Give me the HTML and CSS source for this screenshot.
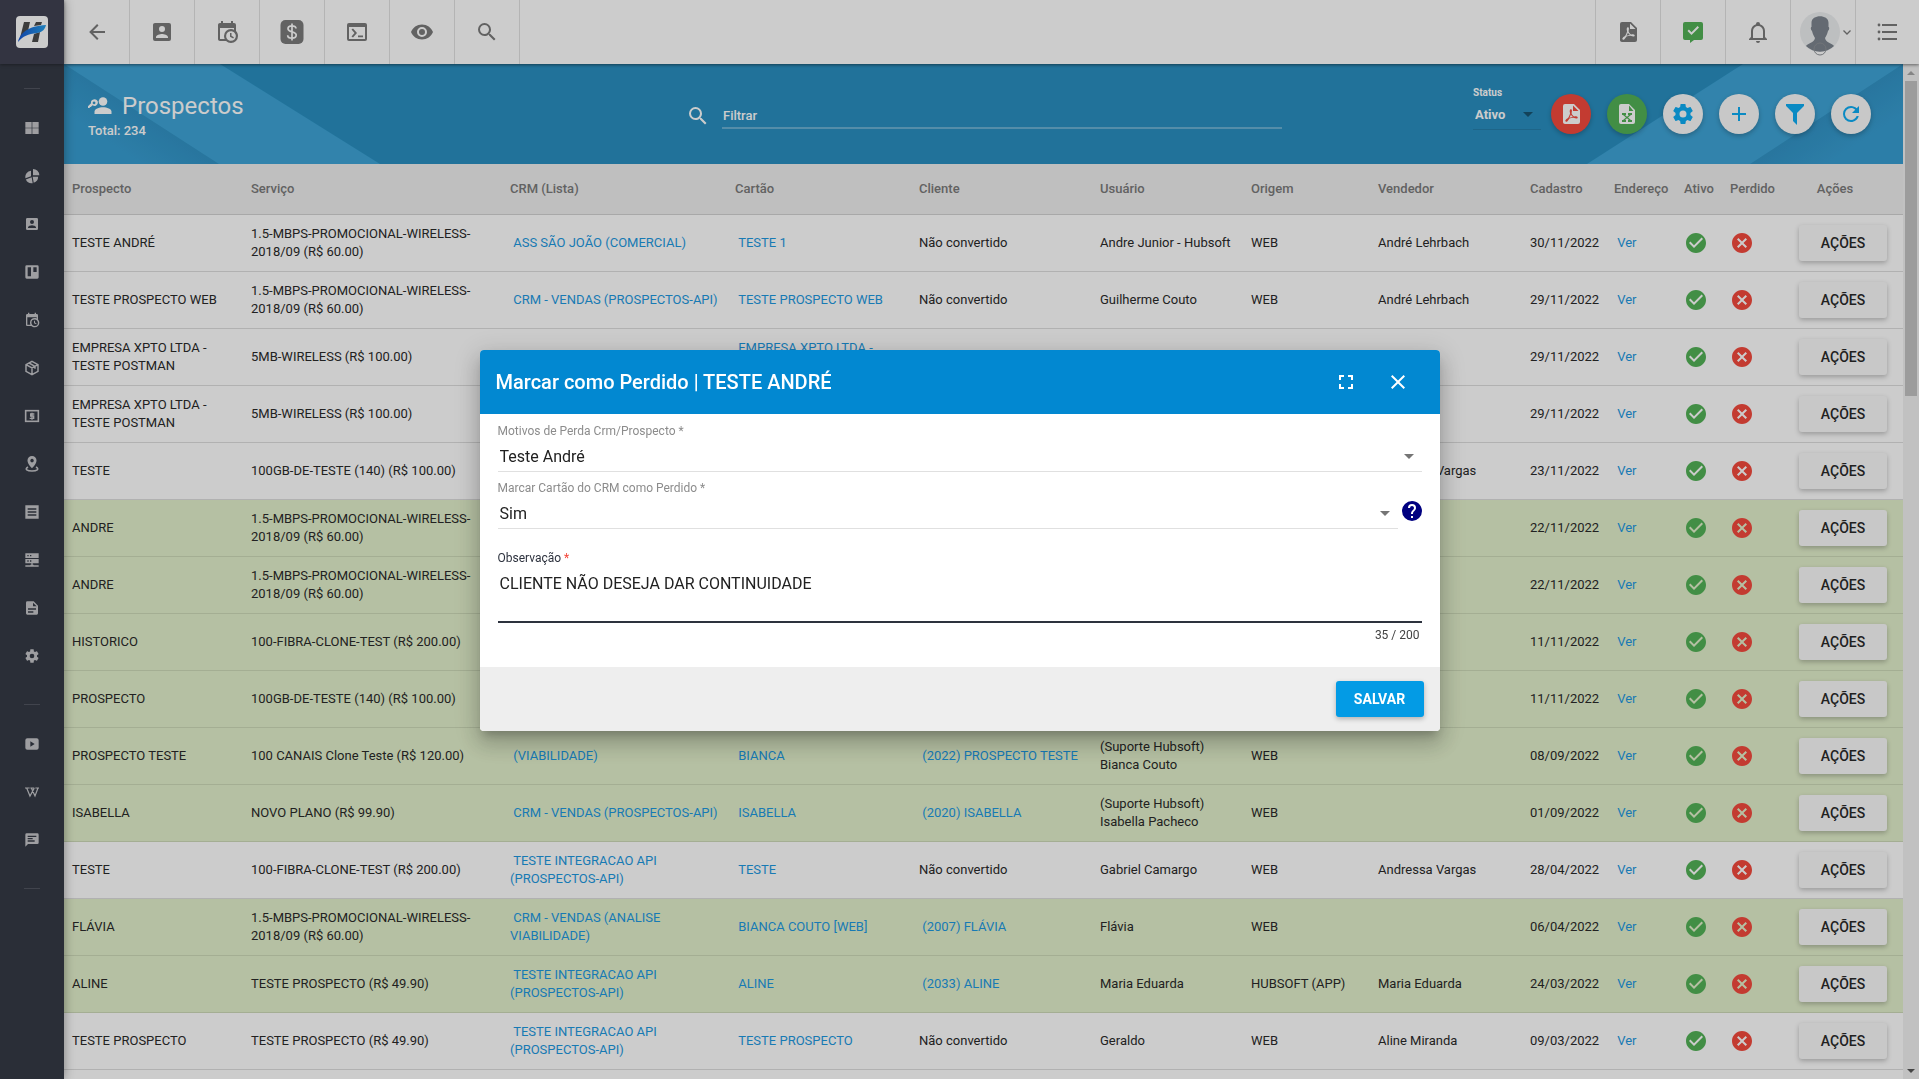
FILE: index.html
```
<!DOCTYPE html>
<html lang="pt-BR">

<head>
    <meta charset="UTF-8">
    <meta name="viewport" content="width=device-width, initial-scale=1.0">
    <title>Prospectos</title>
    <link rel="stylesheet" href="styles.css">
</head>

<body>
    <!-- Icon set -->
    <svg class="icon-set" aria-hidden="true">
        <symbol id="i-back" viewBox="0 0 24 24"><path d="M20,11V13H8L13.5,18.5L12.08,19.92L4.16,12L12.08,4.08L13.5,5.5L8,11H20Z"/></symbol>
        <symbol id="i-account" viewBox="0 0 24 24"><path d="M6,17C6,15 10,13.9 12,13.9C14,13.9 18,15 18,17V18H6M15,9A3,3 0 0,1 12,12A3,3 0 0,1 9,9A3,3 0 0,1 12,6A3,3 0 0,1 15,9M3,5V19A2,2 0 0,0 5,21H19A2,2 0 0,0 21,19V5A2,2 0 0,0 19,3H5C3.89,3 3,3.9 3,5Z"/></symbol>
        <symbol id="i-calendar" viewBox="0 0 24 24"><path d="M15,13H16.5V15.82L18.94,17.23L18.19,18.53L15,16.69V13M19,8H5V19H9.67C9.24,18.09 9,17.07 9,16A7,7 0 0,1 16,9C17.07,9 18.09,9.24 19,9.67V8M5,21C3.89,21 3,20.1 3,19V5C3,3.89 3.89,3 5,3H6V1H8V3H16V1H18V3H19A2,2 0 0,1 21,5V11.1C22.24,12.36 23,14.09 23,16A7,7 0 0,1 16,23C14.09,23 12.36,22.24 11.1,21H5M16,11.15A4.85,4.85 0 0,0 11.15,16C11.15,18.68 13.32,20.85 16,20.85A4.85,4.85 0 0,0 20.85,16C20.85,13.32 18.68,11.15 16,11.15Z"/></symbol>
        <symbol id="i-dollar" viewBox="0 0 24 24"><rect x="0.5" width="23" height="24" rx="5"/><path d="M16,8.5C16,6.8 14.2,5.8 12,5.8S8,6.9 8,8.7C8,12.8 16.2,10.8 16.2,15.1C16.2,17 14.4,18.2 12,18.2S7.7,17 7.7,15.2M12,3.5V20.5" fill="none" stroke="#fff" stroke-width="1.7"/></symbol>
        <symbol id="i-terminal" viewBox="0 0 24 24"><path fill-rule="evenodd" d="M4,3H20A2,2 0 0,1 22,5V19A2,2 0 0,1 20,21H4A2,2 0 0,1 2,19V5A2,2 0 0,1 4,3M4,7V19H20V7ZM6.5,9.5L8,8.5L12,13L8,17.5L6.5,16.5L9.5,13ZM13,15.5H18V17.2H13Z"/></symbol>
        <symbol id="i-eye" viewBox="0 0 24 24"><path d="M12,9A3,3 0 0,0 9,12A3,3 0 0,0 12,15A3,3 0 0,0 15,12A3,3 0 0,0 12,9M12,17A5,5 0 0,1 7,12A5,5 0 0,1 12,7A5,5 0 0,1 17,12A5,5 0 0,1 12,17M12,4.5C7,4.5 2.73,7.61 1,12C2.73,16.39 7,19.5 12,19.5C17,19.5 21.27,16.39 23,12C21.27,7.61 17,4.5 12,4.5Z"/></symbol>
        <symbol id="i-search" viewBox="0 0 24 24"><path d="M9.5,3A6.5,6.5 0 0,1 16,9.5C16,11.11 15.41,12.59 14.44,13.73L14.71,14H15.5L20.5,19L19,20.5L14,15.5V14.71L13.73,14.44C12.59,15.41 11.11,16 9.5,16A6.5,6.5 0 0,1 3,9.5A6.5,6.5 0 0,1 9.5,3M9.5,5C7,5 5,7 5,9.5C5,12 7,14 9.5,14C12,14 14,12 14,9.5C14,7 12,5 9.5,5Z"/></symbol>
        <symbol id="i-pdf" viewBox="0 0 24 24"><path fill-rule="evenodd" d="M14,9H19.5L14,3.5V9M6,2H15L21,8V20A2,2 0 0,1 19,22H6C4.89,22 4,21.1 4,20V4A2,2 0 0,1 6,2M11.93,12.44C12.34,13.34 12.86,14.08 13.46,14.59L13.87,14.91C13,15.07 11.8,15.35 10.53,15.84L10.42,15.88L10.92,14.84C11.37,13.97 11.7,13.18 11.93,12.44M18.41,16.25C18.59,16.07 18.68,15.84 18.69,15.59C18.72,15.39 18.67,15.2 18.57,15.04C18.28,14.57 17.53,14.35 16.29,14.35L15,14.42L14.13,13.84C13.5,13.32 12.93,12.41 12.53,11.28L12.57,11.14C12.9,9.81 13.21,8.2 12.55,7.54C12.39,7.38 12.17,7.3 11.94,7.3H11.7C11.33,7.3 11,7.69 10.91,8.07C10.54,9.4 10.76,10.13 11.13,11.34C10.88,12.23 10.56,13.25 10.05,14.28L9.09,16.08L8.2,16.57C7,17.32 6.43,18.16 6.32,18.69C6.28,18.88 6.3,19.05 6.37,19.23L6.88,19.59L7.32,19.7C8.13,19.7 9.05,18.75 10.29,16.63L10.47,16.56C11.5,16.23 12.78,16 14.5,15.81C15.53,16.32 16.74,16.55 17.5,16.55C17.94,16.55 18.24,16.44 18.41,16.25Z"/></symbol>
        <symbol id="i-excel" viewBox="0 0 24 24"><path fill-rule="evenodd" d="M17,11H13V13H14L12,14.67L10,13H11V11H7V13H8L11,15.5L8,18H7V20H11V18H10L12,16.33L14,18H13V20H17V18H16L13,15.5L16,13H17V11M14,2L20,8V20A2,2 0 0,1 18,22H6A2,2 0 0,1 4,20V4A2,2 0 0,1 6,2H14M14,3.5V9H18.5L14,3.5Z"/></symbol>
        <symbol id="i-message" viewBox="0 0 24 24"><path fill-rule="evenodd" d="M4,2H20A2,2 0 0,1 22,4V18A2,2 0 0,1 20,20H13L9,23V20H4A2,2 0 0,1 2,18V4A2,2 0 0,1 4,2M10.5,15L18,7.5L16.6,6.1L10.5,12.2L7.9,9.6L6.5,11Z"/></symbol>
        <symbol id="i-bell" viewBox="0 0 24 24"><path fill-rule="evenodd" d="M10,21H14A2,2 0 0,1 12,23A2,2 0 0,1 10,21M21,19V20H3V19L5,17V11C5,7.9 7.03,5.17 10,4.29C10,4.19 10,4.1 10,4A2,2 0 0,1 12,2A2,2 0 0,1 14,4C14,4.1 14,4.19 14,4.29C16.97,5.17 19,7.9 19,11V17L21,19M17,11A5,5 0 0,0 12,6A5,5 0 0,0 7,11V18H17V11Z"/></symbol>
        <symbol id="i-list" viewBox="0 0 24 24"><path d="M6,4H21V6H6ZM6,11H21V13H6ZM6,18H21V20H6Z"/><circle cx="3" cy="5" r="1.4"/><circle cx="3" cy="12" r="1.4"/><circle cx="3" cy="19" r="1.4"/></symbol>
        <symbol id="i-gear" viewBox="0 0 24 24"><path fill-rule="evenodd" d="M12,15.5A3.5,3.5 0 0,1 8.5,12A3.5,3.5 0 0,1 12,8.5A3.5,3.5 0 0,1 15.5,12A3.5,3.5 0 0,1 12,15.5M19.43,12.97C19.47,12.65 19.5,12.33 19.5,12C19.5,11.67 19.47,11.34 19.43,11L21.54,9.37C21.73,9.22 21.78,8.95 21.66,8.73L19.66,5.27C19.54,5.05 19.27,4.96 19.05,5.05L16.56,6.05C16.04,5.66 15.5,5.32 14.87,5.07L14.5,2.42C14.46,2.18 14.25,2 14,2H10C9.75,2 9.54,2.18 9.5,2.42L9.13,5.07C8.5,5.32 7.96,5.66 7.44,6.05L4.95,5.05C4.73,4.96 4.46,5.05 4.34,5.27L2.34,8.73C2.21,8.95 2.27,9.22 2.46,9.37L4.57,11C4.53,11.34 4.5,11.67 4.5,12C4.5,12.33 4.53,12.65 4.57,12.97L2.46,14.63C2.27,14.78 2.21,15.05 2.34,15.27L4.34,18.73C4.46,18.95 4.73,19.03 4.95,18.95L7.44,17.94C7.96,18.34 8.5,18.68 9.13,18.93L9.5,21.58C9.54,21.82 9.75,22 10,22H14C14.25,22 14.46,21.82 14.5,21.58L14.87,18.93C15.5,18.67 16.04,18.34 16.56,17.94L19.05,18.95C19.27,19.03 19.54,18.95 19.66,18.73L21.66,15.27C21.78,15.05 21.73,14.78 21.54,14.63L19.43,12.97Z"/></symbol>
        <symbol id="i-plus" viewBox="0 0 24 24"><path d="M19,13H13V19H11V13H5V11H11V5H13V11H19V13Z"/></symbol>
        <symbol id="i-filter" viewBox="0 0 24 24"><path d="M3,2H21V4H20.92L14,10.92V22.91L10,18.91V10.91L3.09,4H3V2Z"/></symbol>
        <symbol id="i-refresh" viewBox="0 0 24 24"><path d="M17.65,6.35C16.2,4.9 14.21,4 12,4A8,8 0 0,0 4,12A8,8 0 0,0 12,20C15.73,20 18.84,17.45 19.73,14H17.65C16.83,16.33 14.61,18 12,18A6,6 0 0,1 6,12A6,6 0 0,1 12,6C13.66,6 15.14,6.69 16.22,7.78L13,11H20V4L17.65,6.35Z"/></symbol>
        <symbol id="i-check" viewBox="0 0 24 24"><path fill-rule="evenodd" d="M12 2C6.48 2 2 6.48 2 12s4.48 10 10 10 10-4.48 10-10S17.52 2 12 2zm-2 15l-5-5 1.41-1.41L10 14.17l7.59-7.59L19 8l-9 9z"/></symbol>
        <symbol id="i-cancel" viewBox="0 0 24 24"><path fill-rule="evenodd" d="M12,2C17.53,2 22,6.47 22,12C22,17.53 17.53,22 12,22C6.47,22 2,17.53 2,12C2,6.47 6.47,2 12,2M15.59,7L12,10.59L8.41,7L7,8.41L10.59,12L7,15.59L8.41,17L12,13.41L15.59,17L17,15.59L13.41,12L17,8.41L15.59,7Z"/></symbol>
        <symbol id="i-people" viewBox="0 0 24 24"><circle cx="15" cy="7.5" r="4.3"/><path d="M6.5,20V17.8C6.5,14.8 11,13.3 15,13.3S23.5,14.8 23.5,17.8V20Z"/><path fill-rule="evenodd" d="M5.5,5.5A3.3,3.3 0 1,1 4.6,11.2L2.8,13H1.8V14H0V12.2L3,9.2A3.3,3.3 0 0,1 5.5,5.5M6,7.4A1.4,1.4 0 1,0 6.1,7.4Z"/></symbol>
        <symbol id="i-grid" viewBox="0 0 24 24"><path d="M2,3H11.5V11.5H2ZM12.5,3H22V11.5H12.5ZM2,12.5H11.5V21H2ZM12.5,12.5H22V21H12.5Z"/></symbol>
        <symbol id="i-pie" viewBox="0 0 24 24"><path d="M13.5,1.5A9.5,9.5 0 0,1 23,11H13.5ZM10.5,4V12.5L2.2,15.5A9.5,9.5 0 0,1 10.5,4M11.5,14L13,22.7A9.5,9.5 0 0,1 2.8,17.2ZM13,13H21.2A9.5,9.5 0 0,1 14.6,22.2Z"/></symbol>
        <symbol id="i-board" viewBox="0 0 24 24"><path fill-rule="evenodd" d="M4,2H20A2,2 0 0,1 22,4V20A2,2 0 0,1 20,22H4A2,2 0 0,1 2,20V4A2,2 0 0,1 4,2M5.5,5V18.5H10.5V5ZM14,5V12H19V5Z"/></symbol>
        <symbol id="i-box" viewBox="0 0 24 24"><path d="M12,2L21,7V17L12,22L3,17V7ZM3,7L12,12L21,7M12,12V22M7.5,4.5L16.5,9.5V13" fill="none" stroke="currentColor" stroke-width="2.2"/></symbol>
        <symbol id="i-cash" viewBox="0 0 24 24"><rect x="2.5" y="4" width="19" height="16" fill="none" stroke="currentColor" stroke-width="2.4"/><path d="M15.5,9H10V12H14.5V15.5H8.5M12,7V17.5" fill="none" stroke="currentColor" stroke-width="2"/></symbol>
        <symbol id="i-pin" viewBox="0 0 24 24"><path fill-rule="evenodd" d="M12,0A6.8,6.8 0 0,1 18.8,6.8C18.8,12 12,18.5 12,18.5S5.2,12 5.2,6.8A6.8,6.8 0 0,1 12,0M12,4.2A2.6,2.6 0 1,0 12.1,4.2Z"/><path d="M6,16.5C0,20 5,22.5 12,22.5S24,20 18,16.5" fill="none" stroke="currentColor" stroke-width="2.2"/></symbol>
        <symbol id="i-article" viewBox="0 0 24 24"><path fill-rule="evenodd" d="M2,2H22V22H2ZM5.5,6.5V8.5H18.5V6.5ZM5.5,11V13H18.5V11ZM5.5,15.5V17.5H18.5V15.5Z"/></symbol>
        <symbol id="i-server" viewBox="0 0 24 24"><path fill-rule="evenodd" d="M2,2H22V9H2ZM5,4.5V6.5H7V4.5ZM9,4.5V6.5H11V4.5ZM2,10.5H22V17H2ZM5,12.5V14.5H7V12.5ZM9,12.5V14.5H11V12.5ZM11,17H13V19H14.5V20H22V22H2V20H9.5V19H11Z"/></symbol>
        <symbol id="i-doc" viewBox="0 0 24 24"><path fill-rule="evenodd" d="M5,2H14.5L21,8.5V20A2,2 0 0,1 19,22H5A2,2 0 0,1 3,20V4A2,2 0 0,1 5,2M13.5,4V9.5H19ZM6,12.5V14.5H18V12.5ZM6,17V19H14V17Z"/></symbol>
        <symbol id="i-play" viewBox="0 0 24 24"><path fill-rule="evenodd" d="M5,3.5H19A3,3 0 0,1 22,6.5V17.5A3,3 0 0,1 19,20.5H5A3,3 0 0,1 2,17.5V6.5A3,3 0 0,1 5,3.5M9.5,8V16L16,12Z"/></symbol>
        <symbol id="i-wiki" viewBox="0 0 24 24"><path d="M1.5,6H8.5M9.5,6H15.5M17,6H22.5M4,6L9,18L15.5,6M11,6L16.5,18L21,6" fill="none" stroke="currentColor" stroke-width="1.8"/></symbol>
        <symbol id="i-chat" viewBox="0 0 24 24"><path fill-rule="evenodd" d="M2,4A2,2 0 0,1 4,2H20A2,2 0 0,1 22,4V16A2,2 0 0,1 20,18H6L2,22ZM5.5,5.5V7.5H18.5V5.5ZM5.5,9V11H13V9ZM5.5,12.5V14.5H16V12.5Z"/></symbol>
        <symbol id="i-fullscreen" viewBox="0 0 24 24"><path d="M5,5H10V7H7V10H5V5M14,5H19V10H17V7H14V5M17,14H19V19H14V17H17V14M10,17V19H5V14H7V17H10Z"/></symbol>
        <symbol id="i-close" viewBox="0 0 24 24"><path d="M19,6.41L17.59,5L12,10.59L6.41,5L5,6.41L10.59,12L5,17.59L6.41,19L12,13.41L17.59,19L19,17.59L13.41,12L19,6.41Z"/></symbol>
        <symbol id="i-help" viewBox="0 0 24 24"><path fill-rule="evenodd" d="M15.07,11.25L14.17,12.17C13.45,12.89 13,13.5 13,15H11V14.5C11,13.39 11.45,12.39 12.17,11.67L13.41,10.41C13.78,10.05 14,9.55 14,9C14,7.89 13.1,7 12,7A2,2 0 0,0 10,9H8A4,4 0 0,1 12,5A4,4 0 0,1 16,9C16,9.88 15.64,10.67 15.07,11.25M13,19H11V17H13M12,2A10,10 0 0,0 2,12A10,10 0 0,0 12,22A10,10 0 0,0 22,12C22,6.47 17.5,2 12,2Z"/></symbol>
        <symbol id="i-caret" viewBox="0 0 10 5"><path d="M0,0H10L5,5Z"/></symbol>
    </svg>

    <div class="app">
        <aside class="sidebar">
            <a href="#" class="logo" aria-label="Início">
                <svg viewBox="0 0 32 32" width="32" height="32">
                    <defs>
                        <linearGradient id="swoosh">
                            <stop offset="0" stop-color="#0b4fd0"/>
                            <stop offset="1" stop-color="#1e9be8"/>
                        </linearGradient>
                    </defs>
                    <rect width="32" height="32" rx="4" fill="#fff"/>
                    <path d="M8,6H14L12,15L4,22ZM20,6H26L25,9L18,10ZM18,18L24,16L22,26H16Z" fill="#444"/>
                    <path d="M2,26C4,17 12,10 30,9C29,13 27,16 21,17C12,18 7,20 2,26Z" fill="url(#swoosh)"/>
                </svg>
            </a>
            <nav class="menu">
                <hr>
                <a href="#" aria-label="Painel"><svg class="icon"><use href="#i-grid"/></svg></a>
                <a href="#" aria-label="Relatórios"><svg class="icon"><use href="#i-pie"/></svg></a>
                <a href="#" aria-label="Clientes"><svg class="icon"><use href="#i-account"/></svg></a>
                <a href="#" aria-label="CRM"><svg class="icon"><use href="#i-board"/></svg></a>
                <a href="#" aria-label="Agenda"><svg class="icon"><use href="#i-calendar"/></svg></a>
                <a href="#" aria-label="Estoque"><svg class="icon"><use href="#i-box"/></svg></a>
                <a href="#" aria-label="Financeiro"><svg class="icon"><use href="#i-cash"/></svg></a>
                <a href="#" aria-label="Mapa"><svg class="icon"><use href="#i-pin"/></svg></a>
                <a href="#" aria-label="Notas"><svg class="icon"><use href="#i-article"/></svg></a>
                <a href="#" aria-label="Rede"><svg class="icon"><use href="#i-server"/></svg></a>
                <a href="#" aria-label="Documentos"><svg class="icon"><use href="#i-doc"/></svg></a>
                <a href="#" aria-label="Configurações"><svg class="icon"><use href="#i-gear"/></svg></a>
                <hr>
                <a href="#" aria-label="Vídeos"><svg class="icon"><use href="#i-play"/></svg></a>
                <a href="#" aria-label="Wiki"><svg class="icon"><use href="#i-wiki"/></svg></a>
                <a href="#" aria-label="Mensagens"><svg class="icon"><use href="#i-chat"/></svg></a>
                <hr>
            </nav>
        </aside>

        <div class="page">
            <header class="topbar">
                <div class="topbar-group">
                    <button type="button" aria-label="Voltar"><svg class="icon"><use href="#i-back"/></svg></button>
                    <button type="button" aria-label="Cliente"><svg class="icon"><use href="#i-account"/></svg></button>
                    <button type="button" aria-label="Agenda"><svg class="icon"><use href="#i-calendar"/></svg></button>
                    <button type="button" aria-label="Financeiro"><svg class="icon"><use href="#i-dollar"/></svg></button>
                    <button type="button" aria-label="Terminal"><svg class="icon"><use href="#i-terminal"/></svg></button>
                    <button type="button" aria-label="Visualizar"><svg class="icon"><use href="#i-eye"/></svg></button>
                    <button type="button" aria-label="Pesquisar"><svg class="icon"><use href="#i-search"/></svg></button>
                </div>
                <div class="topbar-group right">
                    <button type="button" aria-label="PDF"><svg class="icon"><use href="#i-pdf"/></svg></button>
                    <button type="button" class="ok" aria-label="Mensagens"><svg class="icon"><use href="#i-message"/></svg></button>
                    <button type="button" aria-label="Notificações"><svg class="icon"><use href="#i-bell"/></svg></button>
                    <button type="button" class="user" aria-label="Usuário">
                        <svg class="avatar" viewBox="0 0 40 44">
                            <circle cx="20" cy="20" r="20" fill="#eceef0"/>
                            <path d="M11.5,11C11,2 29,2 28.5,11L28.5,15C29.5,15 29.5,18 28,19C27,23 26,24 25,26C26,31 32,31 34,34A20,20 0 0,1 6,34C8,31 14,31 15,26C14,24 13,23 12,19C10.5,18 10.5,15 11.5,15Z" fill="#78808a"/>
                            <circle cx="20" cy="37" r="6" fill="none" stroke="#8a8f94"/>
                        </svg>
                        <svg class="chevron" viewBox="0 0 8 5"><path d="M0.5,0.5L4,4L7.5,0.5" fill="none" stroke="currentColor" stroke-width="1.3"/></svg>
                    </button>
                    <button type="button" aria-label="Menu"><svg class="icon"><use href="#i-list"/></svg></button>
                </div>
            </header>

            <div class="content">
                <main class="main">
                    <section class="page-header">
                        <svg class="band band-left" viewBox="0 0 320 100">
                            <defs>
                                <linearGradient id="foldLeft" gradientUnits="userSpaceOnUse" x1="55" y1="85" x2="78" y2="50">
                                    <stop offset="0" stop-color="#309ad0"/>
                                    <stop offset="1" stop-color="#2a8fc4"/>
                                </linearGradient>
                                <linearGradient id="foldRight" gradientUnits="userSpaceOnUse" x1="267" y1="85" x2="244" y2="50">
                                    <stop offset="0" stop-color="#309ad0"/>
                                    <stop offset="1" stop-color="#2a8fc4"/>
                                </linearGradient>
                            </defs>
                            <path d="M0,0H156L316,100H0Z" fill="#37a1d6"/>
                            <path d="M0,0L155,100H0Z" fill="url(#foldLeft)"/>
                        </svg>
                        <svg class="band band-right" viewBox="0 0 320 100">
                            <path d="M160,0H320V100H4Z" fill="#37a1d6"/>
                            <path d="M320,0V100H167Z" fill="url(#foldRight)"/>
                        </svg>
                        <div class="heading">
                            <h1><svg class="icon"><use href="#i-people"/></svg>Prospectos</h1>
                            <p>Total: 234</p>
                        </div>
                        <div class="search">
                            <label for="filtrar" aria-label="Filtrar"><svg class="icon"><use href="#i-search"/></svg></label>
                            <input type="text" id="filtrar" placeholder="Filtrar">
                        </div>
                        <div class="tools">
                            <div class="status">
                                <label for="status">Status</label>
                                <div class="select-wrapper">
                                    <select id="status"><option>Ativo</option></select>
                                    <svg class="caret"><use href="#i-caret"/></svg>
                                </div>
                            </div>
                            <button type="button" class="fab red" aria-label="Exportar PDF"><svg class="icon"><use href="#i-pdf"/></svg></button>
                            <button type="button" class="fab green" aria-label="Exportar Excel"><svg class="icon"><use href="#i-excel"/></svg></button>
                            <button type="button" class="fab" aria-label="Configurar"><svg class="icon"><use href="#i-gear"/></svg></button>
                            <button type="button" class="fab" aria-label="Adicionar"><svg class="icon"><use href="#i-plus"/></svg></button>
                            <button type="button" class="fab" aria-label="Filtros"><svg class="icon"><use href="#i-filter"/></svg></button>
                            <button type="button" class="fab" aria-label="Atualizar"><svg class="icon"><use href="#i-refresh"/></svg></button>
                        </div>
                    </section>

                    <table class="prospects">
                        <colgroup>
                            <col class="c-prospecto"><col class="c-servico"><col class="c-crm"><col class="c-cartao"><col class="c-cliente"><col class="c-usuario"><col class="c-origem"><col class="c-vendedor"><col class="c-cadastro"><col class="c-endereco"><col class="c-ativo"><col class="c-perdido"><col class="c-acoes">
                        </colgroup>
                        <thead>
                            <tr><th>Prospecto</th><th>Serviço</th><th>CRM (Lista)</th><th>Cartão</th><th>Cliente</th><th>Usuário</th><th>Origem</th><th>Vendedor</th><th>Cadastro</th><th>Endereço</th><th>Ativo</th><th>Perdido</th><th>Ações</th></tr>
                        </thead>
                        <tbody>
                            <tr>
                                <td>TESTE ANDRÉ</td><td>1.5-MBPS-PROMOCIONAL-WIRELESS-2018/09 (R$ 60.00)</td>
                                <td><a href="#">&nbsp;ASS SÃO JOÃO (COMERCIAL)</a></td><td><a href="#">&nbsp;TESTE 1</a></td><td>Não convertido</td>
                                <td>Andre Junior - Hubsoft</td><td>WEB</td><td>André Lehrbach</td><td>30/11/2022</td><td><a href="#">&nbsp;Ver</a></td>
                                <td><svg class="icon on"><use href="#i-check"/></svg></td><td><svg class="icon off"><use href="#i-cancel"/></svg></td><td><button type="button" class="btn">AÇÕES</button></td>
                            </tr>
                            <tr>
                                <td>TESTE PROSPECTO WEB</td><td>1.5-MBPS-PROMOCIONAL-WIRELESS-2018/09 (R$ 60.00)</td>
                                <td><a href="#">&nbsp;CRM - VENDAS (PROSPECTOS-API)</a></td><td><a href="#">&nbsp;TESTE PROSPECTO WEB</a></td><td>Não convertido</td>
                                <td>Guilherme Couto</td><td>WEB</td><td>André Lehrbach</td><td>29/11/2022</td><td><a href="#">&nbsp;Ver</a></td>
                                <td><svg class="icon on"><use href="#i-check"/></svg></td><td><svg class="icon off"><use href="#i-cancel"/></svg></td><td><button type="button" class="btn">AÇÕES</button></td>
                            </tr>
                            <tr>
                                <td>EMPRESA XPTO LTDA - TESTE POSTMAN</td><td>5MB-WIRELESS (R$ 100.00)</td>
                                <td></td><td><a href="#">&nbsp;EMPRESA XPTO LTDA - TESTE POSTMAN</a></td><td></td>
                                <td></td><td></td><td></td><td>29/11/2022</td><td><a href="#">&nbsp;Ver</a></td>
                                <td><svg class="icon on"><use href="#i-check"/></svg></td><td><svg class="icon off"><use href="#i-cancel"/></svg></td><td><button type="button" class="btn">AÇÕES</button></td>
                            </tr>
                            <tr>
                                <td>EMPRESA XPTO LTDA - TESTE POSTMAN</td><td>5MB-WIRELESS (R$ 100.00)</td>
                                <td></td><td></td><td></td>
                                <td></td><td></td><td></td><td>29/11/2022</td><td><a href="#">&nbsp;Ver</a></td>
                                <td><svg class="icon on"><use href="#i-check"/></svg></td><td><svg class="icon off"><use href="#i-cancel"/></svg></td><td><button type="button" class="btn">AÇÕES</button></td>
                            </tr>
                            <tr>
                                <td>TESTE</td><td>100GB-DE-TESTE (140) (R$ 100.00)</td>
                                <td></td><td></td><td></td>
                                <td></td><td></td><td>Andressa Vargas</td><td>23/11/2022</td><td><a href="#">&nbsp;Ver</a></td>
                                <td><svg class="icon on"><use href="#i-check"/></svg></td><td><svg class="icon off"><use href="#i-cancel"/></svg></td><td><button type="button" class="btn">AÇÕES</button></td>
                            </tr>
                            <tr class="converted">
                                <td>ANDRE</td><td>1.5-MBPS-PROMOCIONAL-WIRELESS-2018/09 (R$ 60.00)</td>
                                <td></td><td></td><td></td>
                                <td></td><td></td><td></td><td>22/11/2022</td><td><a href="#">&nbsp;Ver</a></td>
                                <td><svg class="icon on"><use href="#i-check"/></svg></td><td><svg class="icon off"><use href="#i-cancel"/></svg></td><td><button type="button" class="btn">AÇÕES</button></td>
                            </tr>
                            <tr class="converted">
                                <td>ANDRE</td><td>1.5-MBPS-PROMOCIONAL-WIRELESS-2018/09 (R$ 60.00)</td>
                                <td></td><td></td><td></td>
                                <td></td><td></td><td></td><td>22/11/2022</td><td><a href="#">&nbsp;Ver</a></td>
                                <td><svg class="icon on"><use href="#i-check"/></svg></td><td><svg class="icon off"><use href="#i-cancel"/></svg></td><td><button type="button" class="btn">AÇÕES</button></td>
                            </tr>
                            <tr class="converted">
                                <td>HISTORICO</td><td>100-FIBRA-CLONE-TEST (R$ 200.00)</td>
                                <td></td><td></td><td></td>
                                <td></td><td></td><td></td><td>11/11/2022</td><td><a href="#">&nbsp;Ver</a></td>
                                <td><svg class="icon on"><use href="#i-check"/></svg></td><td><svg class="icon off"><use href="#i-cancel"/></svg></td><td><button type="button" class="btn">AÇÕES</button></td>
                            </tr>
                            <tr class="converted">
                                <td>PROSPECTO</td><td>100GB-DE-TESTE (140) (R$ 100.00)</td>
                                <td></td><td></td><td></td>
                                <td></td><td></td><td></td><td>11/11/2022</td><td><a href="#">&nbsp;Ver</a></td>
                                <td><svg class="icon on"><use href="#i-check"/></svg></td><td><svg class="icon off"><use href="#i-cancel"/></svg></td><td><button type="button" class="btn">AÇÕES</button></td>
                            </tr>
                            <tr class="converted">
                                <td>PROSPECTO TESTE</td><td>100 CANAIS Clone Teste (R$ 120.00)</td>
                                <td><a href="#">&nbsp;(VIABILIDADE)</a></td><td><a href="#">&nbsp;BIANCA</a></td><td><a href="#">&nbsp;(2022) PROSPECTO TESTE</a></td>
                                <td>(Suporte Hubsoft)<br>Bianca Couto</td><td>WEB</td><td></td><td>08/09/2022</td><td><a href="#">&nbsp;Ver</a></td>
                                <td><svg class="icon on"><use href="#i-check"/></svg></td><td><svg class="icon off"><use href="#i-cancel"/></svg></td><td><button type="button" class="btn">AÇÕES</button></td>
                            </tr>
                            <tr class="converted">
                                <td>ISABELLA</td><td>NOVO PLANO (R$ 99.90)</td>
                                <td><a href="#">&nbsp;CRM - VENDAS (PROSPECTOS-API)</a></td><td><a href="#">&nbsp;ISABELLA</a></td><td><a href="#">&nbsp;(2020) ISABELLA</a></td>
                                <td>(Suporte Hubsoft)<br>Isabella Pacheco</td><td>WEB</td><td></td><td>01/09/2022</td><td><a href="#">&nbsp;Ver</a></td>
                                <td><svg class="icon on"><use href="#i-check"/></svg></td><td><svg class="icon off"><use href="#i-cancel"/></svg></td><td><button type="button" class="btn">AÇÕES</button></td>
                            </tr>
                            <tr>
                                <td>TESTE</td><td>100-FIBRA-CLONE-TEST (R$ 200.00)</td>
                                <td><a href="#">&nbsp;TESTE INTEGRACAO API (PROSPECTOS-API)</a></td><td><a href="#">&nbsp;TESTE</a></td><td>Não convertido</td>
                                <td>Gabriel Camargo</td><td>WEB</td><td>Andressa Vargas</td><td>28/04/2022</td><td><a href="#">&nbsp;Ver</a></td>
                                <td><svg class="icon on"><use href="#i-check"/></svg></td><td><svg class="icon off"><use href="#i-cancel"/></svg></td><td><button type="button" class="btn">AÇÕES</button></td>
                            </tr>
                            <tr class="converted">
                                <td>FLÁVIA</td><td>1.5-MBPS-PROMOCIONAL-WIRELESS-2018/09 (R$ 60.00)</td>
                                <td><a href="#">&nbsp;CRM - VENDAS (ANALISE VIABILIDADE)</a></td><td><a href="#">&nbsp;BIANCA COUTO [WEB]</a></td><td><a href="#">&nbsp;(2007) FLÁVIA</a></td>
                                <td>Flávia</td><td>WEB</td><td></td><td>06/04/2022</td><td><a href="#">&nbsp;Ver</a></td>
                                <td><svg class="icon on"><use href="#i-check"/></svg></td><td><svg class="icon off"><use href="#i-cancel"/></svg></td><td><button type="button" class="btn">AÇÕES</button></td>
                            </tr>
                            <tr class="converted">
                                <td>ALINE</td><td>TESTE PROSPECTO (R$ 49.90)</td>
                                <td><a href="#">&nbsp;TESTE INTEGRACAO API (PROSPECTOS-API)</a></td><td><a href="#">&nbsp;ALINE</a></td><td><a href="#">&nbsp;(2033) ALINE</a></td>
                                <td>Maria Eduarda</td><td>HUBSOFT (APP)</td><td>Maria Eduarda</td><td>24/03/2022</td><td><a href="#">&nbsp;Ver</a></td>
                                <td><svg class="icon on"><use href="#i-check"/></svg></td><td><svg class="icon off"><use href="#i-cancel"/></svg></td><td><button type="button" class="btn">AÇÕES</button></td>
                            </tr>
                            <tr>
                                <td>TESTE PROSPECTO</td><td>TESTE PROSPECTO (R$ 49.90)</td>
                                <td><a href="#">&nbsp;TESTE INTEGRACAO API (PROSPECTOS-API)</a></td><td><a href="#">&nbsp;TESTE PROSPECTO</a></td><td>Não convertido</td>
                                <td>Geraldo</td><td>WEB</td><td>Aline Miranda</td><td>09/03/2022</td><td><a href="#">&nbsp;Ver</a></td>
                                <td><svg class="icon on"><use href="#i-check"/></svg></td><td><svg class="icon off"><use href="#i-cancel"/></svg></td><td><button type="button" class="btn">AÇÕES</button></td>
                            </tr>
                        </tbody>
                    </table>
                </main>

                <div class="scrollbar" aria-hidden="true">
                    <svg class="scroll-arrow" viewBox="0 0 8 4"><path d="M0,4L4,0L8,4Z" fill="#a3a3a3"/></svg>
                    <div class="scroll-thumb"></div>
                    <svg class="scroll-arrow" viewBox="0 0 8 4"><path d="M0,0H8L4,4Z" fill="#505050"/></svg>
                </div>
            </div>
        </div>
    </div>

    <div class="backdrop">
        <form class="modal" role="dialog" aria-labelledby="modalTitle">
            <header class="modal-header">
                <h2 id="modalTitle">Marcar como Perdido | TESTE ANDRÉ</h2>
                <button type="button" aria-label="Tela cheia"><svg class="icon"><use href="#i-fullscreen"/></svg></button>
                <button type="button" aria-label="Fechar"><svg class="icon"><use href="#i-close"/></svg></button>
            </header>

            <div class="modal-body">
                <div class="field">
                    <label for="motivo">Motivos de Perda Crm/Prospecto *</label>
                    <div class="select-wrapper">
                        <select id="motivo"><option>Teste André</option></select>
                        <svg class="caret"><use href="#i-caret"/></svg>
                    </div>
                </div>

                <div class="field-row">
                    <div class="field">
                        <label for="cartao">Marcar Cartão do CRM como Perdido *</label>
                        <div class="select-wrapper">
                            <select id="cartao"><option>Sim</option></select>
                            <svg class="caret"><use href="#i-caret"/></svg>
                        </div>
                    </div>
                    <button type="button" class="help" aria-label="Ajuda"><svg class="icon"><use href="#i-help"/></svg></button>
                </div>

                <div class="field observation">
                    <label for="observacao">Observação<span class="required"> *</span></label>
                    <textarea id="observacao" maxlength="200">CLIENTE NÃO DESEJA DAR CONTINUIDADE</textarea>
                    <div class="counter">35 / 200</div>
                </div>
            </div>

            <footer class="modal-footer">
                <button type="submit" class="btn save">SALVAR</button>
            </footer>
        </form>
    </div>
</body>

</html>
```

FILE: styles.css
```
/* Basic reset */
* {
    margin: 0;
    padding: 0;
    box-sizing: border-box;
}

body {
    font-family: Roboto, sans-serif;
    font-size: 13px;
    line-height: 18px;
    color: #212121;
    overflow: hidden;
}

button,
input,
select,
textarea {
    font-family: inherit;
    border: none;
    background: none;
}

button {
    cursor: pointer;
}

a {
    color: #1495e0;
    text-decoration: none;
}

.icon-set {
    display: none;
}

.icon {
    width: 24px;
    height: 24px;
    fill: currentColor;
    flex-shrink: 0;
}

.app {
    display: flex;
    height: 100vh;
}

/* Sidebar */
.sidebar {
    width: 64px;
    flex-shrink: 0;
    background-color: #2d323e;
    box-shadow: 0 0 10px rgba(0, 0, 0, 0.4);
    z-index: 2;
}

.logo {
    display: flex;
    align-items: center;
    justify-content: center;
    height: 64px;
    background-color: #383a4b;
    box-shadow: 0 1px 3px rgba(0, 0, 0, 0.4);
}

.menu a {
    display: flex;
    align-items: center;
    justify-content: center;
    height: 48px;
    color: #c3c4c8;
}

.menu .icon {
    width: 16px;
    height: 16px;
}

.menu hr {
    width: 16px;
    border: none;
    border-top: 1px solid #4b4f5a;
    margin: 24px auto 15px;
}

/* Top bar */
.page {
    flex: 1;
    min-width: 0;
    display: flex;
    flex-direction: column;
}

.topbar {
    display: flex;
    justify-content: space-between;
    height: 64px;
    flex-shrink: 0;
    background-color: #ffffff;
    box-shadow: 0 1px 3px rgba(0, 0, 0, 0.5);
    z-index: 1;
}

.topbar-group {
    display: flex;
    border-right: 1px solid #e0e0e0;
}

.topbar-group.right {
    border-right: none;
}

.topbar button {
    display: flex;
    align-items: center;
    justify-content: center;
    width: 65px;
    border-left: 1px solid #e0e0e0;
    color: #757575;
}

.topbar-group:first-child button:first-child {
    border-left-color: transparent;
}

.topbar-group.right button:last-child {
    width: 64px;
}

.topbar button.ok {
    color: #4caf50;
}

.topbar .user {
    gap: 3px;
    padding-left: 4px;
}

.avatar {
    width: 40px;
    height: 44px;
    margin-top: 4px;
}

.chevron {
    width: 8px;
    height: 5px;
}

/* Page header */
.content {
    flex: 1;
    min-height: 0;
    display: flex;
}

.main {
    flex: 1;
    min-width: 0;
    overflow: hidden;
}

.page-header {
    position: relative;
    display: flex;
    align-items: center;
    justify-content: space-between;
    height: 100px;
    padding: 0 32px 0 24px;
    background-color: #218bbf;
    color: #ffffff;
}

.page-header > div {
    z-index: 1;
}

.band {
    position: absolute;
    top: 0;
    width: 320px;
    height: 100px;
}

.band-left {
    left: 0;
}

.band-right {
    right: 0;
}

.heading {
    flex: 0 1 598px;
    padding-top: 3px;
}

.heading h1 {
    display: flex;
    align-items: center;
    gap: 10px;
    font-size: 24px;
    font-weight: 400;
    line-height: 30px;
}

.heading p {
    font-weight: 500;
    line-height: 20px;
}

.search {
    display: flex;
    align-items: center;
    flex: 0 1 596px;
    gap: 12px;
    margin-top: 4px;
    margin-right: auto;
}

.search label {
    display: flex;
}

.search input {
    flex: 1;
    min-width: 0;
    height: 26px;
    padding: 0 1px;
    border-bottom: 2px solid rgba(255, 255, 255, 0.3);
    color: #ffffff;
    font-size: 13px;
    font-weight: 500;
}

.search input::placeholder {
    color: #ffffff;
}

.tools {
    display: flex;
    align-items: center;
    gap: 16px;
}

.status {
    width: 68px;
    margin-right: -6px;
    padding-bottom: 12px;
}

.status label {
    display: block;
    font-size: 10px;
    font-weight: 700;
    line-height: 14px;
}

.select-wrapper {
    position: relative;
}

.select-wrapper select {
    width: 100%;
    appearance: none;
    padding: 0 2px;
}

.select-wrapper .caret {
    position: absolute;
    top: 50%;
    right: 8px;
    width: 10px;
    height: 5px;
    margin-top: -3px;
    fill: #757575;
    pointer-events: none;
}

.status select {
    height: 30px;
    border-bottom: 1px solid rgba(0, 0, 0, 0.12);
    color: #ffffff;
    font-size: 13px;
    font-weight: 700;
}

.status .caret {
    fill: #0f4d6b;
}

.fab {
    display: flex;
    align-items: center;
    justify-content: center;
    width: 40px;
    height: 40px;
    border-radius: 50%;
    background-color: #fafafa;
    color: #03a9f4;
    box-shadow: 0 2px 5px rgba(0, 0, 0, 0.26);
}

.fab.red {
    background-color: #f44336;
    color: #ffffff;
}

.fab.green {
    background-color: #4caf50;
    color: #ffffff;
}

/* Prospects table */
.prospects {
    width: 100%;
    table-layout: fixed;
    border-collapse: separate;
    border-spacing: 0;
}

.c-prospecto { width: 179px; }
.c-servico { width: 259px; }
.c-crm { width: 225px; }
.c-cartao { width: 184px; }
.c-cliente { width: 181px; }
.c-usuario { width: 151px; }
.c-origem { width: 127px; }
.c-vendedor { width: 152px; }
.c-cadastro { width: 84px; }
.c-endereco { width: 70px; }
.c-ativo { width: 46px; }
.c-perdido { width: 61px; }
.c-acoes { width: 120px; }

.prospects th {
    height: 51px;
    padding: 0 0 0 8px;
    background-color: #eeeeee;
    border-bottom: 1px solid #d0d0d0;
    color: #757575;
    font-weight: 500;
    text-align: left;
}

.prospects td {
    height: 57px;
    padding: 0 8px;
    background-color: #ffffff;
    border-bottom: 1px solid #dcdcdc;
    vertical-align: middle;
}

.prospects .converted td {
    background-color: #e2f0ca;
    border-bottom-color: #cbd8b5;
}

.prospects td .icon {
    display: block;
}

.prospects td:nth-child(n+9) {
    padding-right: 0;
}

.prospects th:last-child {
    padding: 0 16px 0 0;
    text-align: center;
}

.prospects td:last-child {
    padding: 0;
    text-align: center;
}

.on {
    color: #4caf50;
}

.off {
    color: #f44336;
}

.btn {
    width: 88px;
    height: 36px;
    border-radius: 3px;
    background-color: #fafafa;
    color: #212121;
    font-size: 14px;
    font-weight: 500;
    box-shadow: 0 2px 5px rgba(0, 0, 0, 0.26);
}

/* Scrollbar */
.scrollbar {
    display: flex;
    flex-direction: column;
    align-items: center;
    width: 16px;
    background-color: #f1f1f1;
}

.scroll-arrow {
    width: 8px;
    height: 4px;
    margin: 7px 0 6px;
}

.scroll-thumb {
    width: 12px;
    height: 31%;
    margin-bottom: auto;
    background-color: #c1c1c1;
}

/* Modal */
.backdrop {
    position: fixed;
    inset: 0;
    z-index: 10;
    display: flex;
    align-items: center;
    justify-content: center;
    padding-top: 2px;
    background-color: rgba(33, 33, 33, 0.23);
}

.modal {
    width: 90%;
    max-width: 960px;
    border-radius: 4px;
    background-color: #ffffff;
    box-shadow: 0 7px 8px -4px rgba(0, 0, 0, 0.2), 0 13px 19px 2px rgba(0, 0, 0, 0.14), 0 5px 24px 4px rgba(0, 0, 0, 0.12);
    overflow: hidden;
}

.modal-header {
    display: flex;
    align-items: center;
    gap: 28px;
    height: 64px;
    padding: 0 30px 0 16px;
    background-color: #0288d1;
    color: #ffffff;
}

.modal-header h2 {
    flex: 1;
    font-size: 20px;
    font-weight: 500;
}

.modal-header button {
    display: flex;
    color: #ffffff;
}

.modal-body {
    padding: 9px 18px 24px;
}

.field {
    flex: 1;
    margin-bottom: 8px;
}

.field label {
    display: block;
    margin-bottom: 3px;
    color: #8c8c8c;
    font-size: 12px;
    line-height: 16px;
}

.field select {
    height: 30px;
    border-bottom: 1px solid #e0e0e0;
    color: #212121;
    font-size: 16px;
}

.field-row {
    display: flex;
    align-items: flex-end;
    margin-bottom: 13px;
}

.help {
    display: flex;
    width: 26px;
    justify-content: flex-end;
    margin: 0 -2px 14px 0;
    color: #000080;
}

.observation {
    margin-bottom: 0;
}

.observation label {
    color: #2d323e;
}

.required {
    color: #f44336;
}

.observation textarea {
    display: block;
    width: 100%;
    height: 54px;
    padding: 5px 2px;
    border-bottom: 2px solid #2d323e;
    color: #212121;
    font-size: 16px;
    line-height: 20px;
    resize: none;
    outline: none;
}

.counter {
    margin-top: 4px;
    padding-right: 2px;
    color: #424242;
    font-size: 12px;
    line-height: 16px;
    text-align: right;
}

.modal-footer {
    display: flex;
    align-items: center;
    justify-content: flex-end;
    height: 64px;
    padding: 0 16px;
    background-color: #eeeeee;
}

.btn.save {
    background-color: #039be5;
    color: #ffffff;
    font-weight: 700;
}
```
